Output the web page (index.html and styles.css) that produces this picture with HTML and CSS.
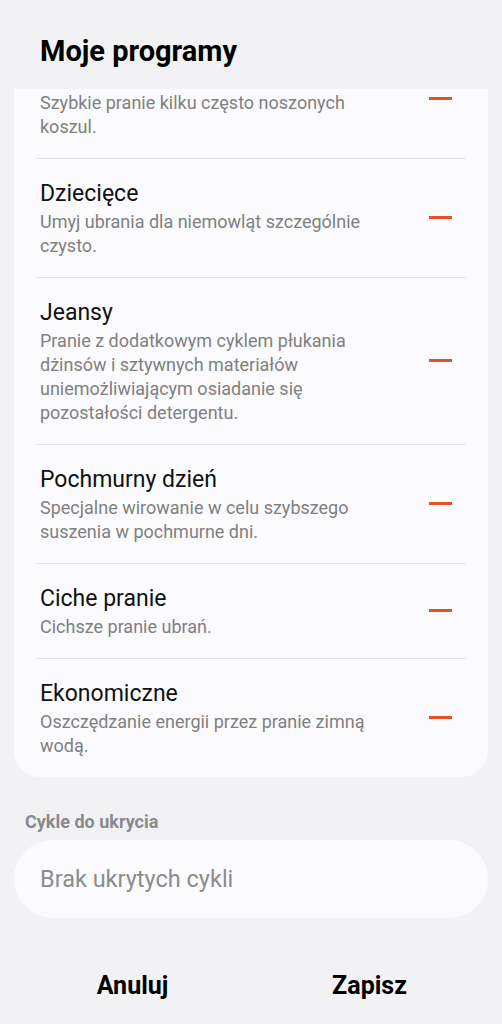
FILE: index.html
```html
<!DOCTYPE html>
<html lang="pl">
<head>
    <meta charset="UTF-8">
    <meta name="viewport" content="width=device-width, initial-scale=1.0">
    <title>Moje programy</title>
    <link rel="stylesheet" href="styles.css">
</head>
<body>
    <h1 class="title">Moje programy</h1>

    <div class="scroller">
        <ul class="card">
            <li class="row">
                <div class="text">
                    <p class="name">Koszule</p>
                    <p class="desc">Szybkie pranie kilku często noszonych koszul.</p>
                </div>
                <button class="remove" aria-label="Usuń"></button>
            </li>
            <li class="row">
                <div class="text">
                    <p class="name">Dziecięce</p>
                    <p class="desc">Umyj ubrania dla niemowląt szczególnie czysto.</p>
                </div>
                <button class="remove" aria-label="Usuń"></button>
            </li>
            <li class="row">
                <div class="text">
                    <p class="name">Jeansy</p>
                    <p class="desc">Pranie z dodatkowym cyklem płukania dżinsów i sztywnych materiałów uniemożliwiającym osiadanie się pozostałości detergentu.</p>
                </div>
                <button class="remove" aria-label="Usuń"></button>
            </li>
            <li class="row">
                <div class="text">
                    <p class="name">Pochmurny dzień</p>
                    <p class="desc">Specjalne wirowanie w celu szybszego suszenia w pochmurne dni.</p>
                </div>
                <button class="remove" aria-label="Usuń"></button>
            </li>
            <li class="row">
                <div class="text">
                    <p class="name">Ciche pranie</p>
                    <p class="desc">Cichsze pranie ubrań.</p>
                </div>
                <button class="remove" aria-label="Usuń"></button>
            </li>
            <li class="row">
                <div class="text">
                    <p class="name">Ekonomiczne</p>
                    <p class="desc">Oszczędzanie energii przez pranie zimną wodą.</p>
                </div>
                <button class="remove" aria-label="Usuń"></button>
            </li>
        </ul>
    </div>

    <h2 class="section">Cykle do ukrycia</h2>
    <div class="hidden-box">Brak ukrytych cykli</div>

    <div class="actions">
        <button class="action">Anuluj</button>
        <button class="action">Zapisz</button>
    </div>
</body>
</html>
```

FILE: styles.css
```css
body {
    margin: 0;
    width: 502px;
    height: 1024px;
    overflow: hidden;
    background-color: #f2f2f4;
    font-family: Roboto, "Noto Sans", sans-serif;
    color: #111;
}
.title {
    margin: 33px 0 0 40px;
    font-size: 29px;
    line-height: 36px;
    font-weight: 700;
    color: #000;
}
.scroller {
    margin: 20px 14px 0;
    overflow: hidden;
}
.card {
    list-style: none;
    margin: -49px 0 0;
    padding: 0 22px;
    background-color: #fbfbfd;
    border-radius: 26px;
}
.row {
    display: flex;
    align-items: center;
    padding: 18px 14px 19px 4px;
    border-bottom: 1px solid #e3e3e6;
}
.row:last-child {
    border-bottom: none;
}
.text {
    flex: 1;
}
.name {
    margin: 0;
    font-size: 23px;
    line-height: 33px;
    color: #111;
}
.desc {
    margin: 0;
    width: 340px;
    font-size: 18px;
    line-height: 24px;
    color: #808080;
}
.remove {
    width: 23px;
    height: 3px;
    padding: 0;
    border: none;
    background-color: #e6531f;
}
.section {
    margin: 35px 0 0 25px;
    font-size: 18px;
    line-height: 20px;
    font-weight: 700;
    color: #8a8a8c;
}
.hidden-box {
    margin: 8px 14px 0;
    height: 78px;
    line-height: 78px;
    padding-left: 26px;
    border-radius: 39px;
    background-color: #fbfbfd;
    font-size: 23.5px;
    color: #8c8c8c;
}
.actions {
    display: flex;
    margin: 40px 14px 0;
}
.action {
    flex: 1;
    height: 54px;
    border: none;
    background: none;
    font-family: Roboto, "Noto Sans", sans-serif;
    font-size: 25px;
    font-weight: 700;
    color: #000;
}
```
